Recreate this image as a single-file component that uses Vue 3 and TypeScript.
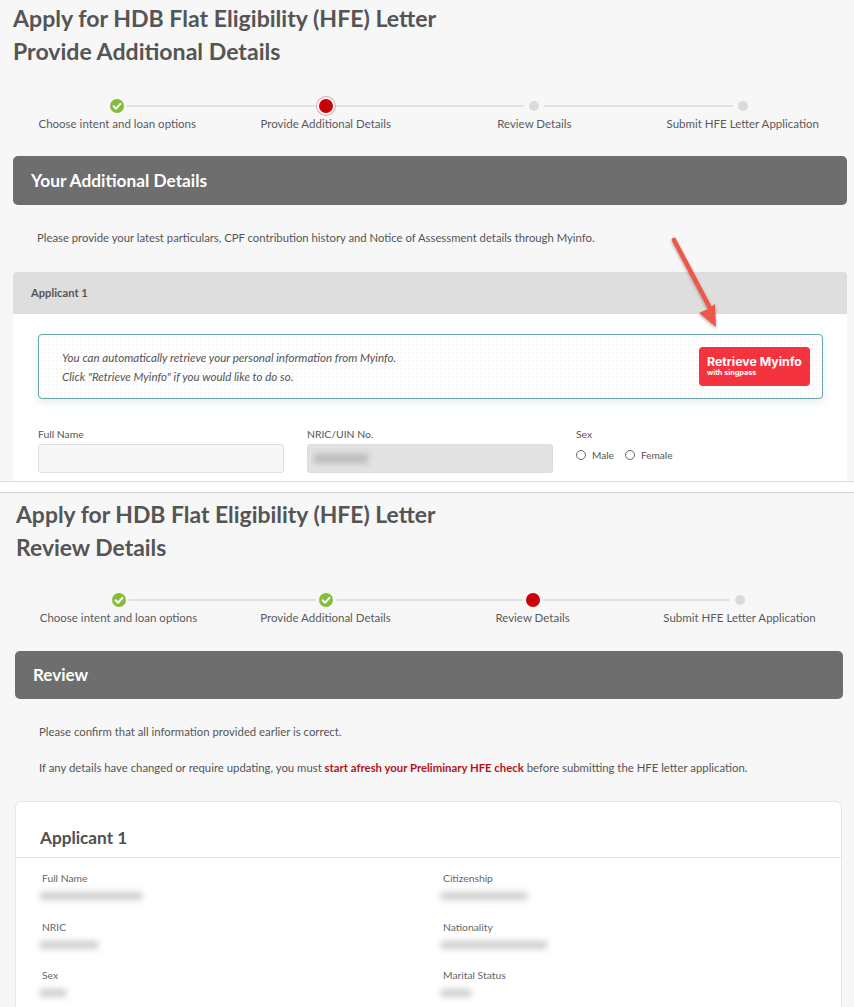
<script setup lang="ts">
type StepState = 'done' | 'active' | 'pending'
interface Step { label: string; state: StepState }
interface Field { label: string; blur: number }

const stepsTop: Step[] = [
  { label: 'Choose intent and loan options', state: 'done' },
  { label: 'Provide Additional Details', state: 'active' },
  { label: 'Review Details', state: 'pending' },
  { label: 'Submit HFE Letter Application', state: 'pending' },
]
const stepsBottom: Step[] = [
  { label: 'Choose intent and loan options', state: 'done' },
  { label: 'Provide Additional Details', state: 'done' },
  { label: 'Review Details', state: 'active' },
  { label: 'Submit HFE Letter Application', state: 'pending' },
]
const fieldsLeft: Field[] = [
  { label: 'Full Name', blur: 102 },
  { label: 'NRIC', blur: 58 },
  { label: 'Sex', blur: 26 },
]
const fieldsRight: Field[] = [
  { label: 'Citizenship', blur: 86 },
  { label: 'Nationality', blur: 106 },
  { label: 'Marital Status', blur: 30 },
]
</script>

<template>
  <div class="page">
    <section class="shot shot-top">
      <h1 class="title">Apply for HDB Flat Eligibility (HFE) Letter<br />Provide Additional Details</h1>

      <div class="stepper">
        <div v-for="(s, i) in stepsTop" :key="s.label" class="step">
          <div class="head">
            <span class="line" :class="{ hidden: i === 0 }"></span>
            <span class="dot" :class="s.state">
              <svg v-if="s.state === 'done'" viewBox="0 0 14 14" width="14" height="14"><path d="M3.6 7.3l2.4 2.4 4.4-4.8" fill="none" stroke="#fff" stroke-width="2" stroke-linecap="round" stroke-linejoin="round" /></svg>
            </span>
            <span class="line" :class="{ hidden: i === stepsTop.length - 1 }"></span>
          </div>
          <div class="step-label">{{ s.label }}</div>
        </div>
      </div>

      <div class="bar">Your Additional Details</div>
      <p class="intro">Please provide your latest particulars, CPF contribution history and Notice of Assessment details through Myinfo.</p>

      <div class="form-card">
        <div class="form-card-head">Applicant 1</div>
        <div class="form-card-body">
          <div class="alert">
            <div class="alert-text">
              <div>You can automatically retrieve your personal information from Myinfo.</div>
              <div>Click "Retrieve Myinfo" if you would like to do so.</div>
            </div>
            <div class="myinfo">
              <span class="myinfo-main">Retrieve Myinfo</span>
              <span class="myinfo-sub">with singpass</span>
            </div>
          </div>

          <div class="form-row">
            <div class="form-col">
              <div class="form-label">Full Name</div>
              <div class="input"></div>
            </div>
            <div class="form-col">
              <div class="form-label">NRIC/UIN No.</div>
              <div class="input disabled"><span class="blur-inline"></span></div>
            </div>
            <div class="form-col">
              <div class="form-label">Sex</div>
              <div class="radios">
                <span class="radio"></span><span class="radio-label">Male</span>
                <span class="radio"></span><span class="radio-label">Female</span>
              </div>
            </div>
          </div>
        </div>
      </div>

      <svg class="arrow" viewBox="0 0 64 100" width="64" height="100">
        <defs>
          <filter id="arrow-shadow" x="-30%" y="-10%" width="160%" height="125%">
            <feDropShadow dx="0" dy="1.5" stdDeviation="1.5" flood-color="#000" flood-opacity="0.35" />
          </filter>
        </defs>
        <g filter="url(#arrow-shadow)">
          <path d="M7 5 L44 75" stroke="#ee5849" stroke-width="4.6" stroke-linecap="round" fill="none" />
          <path d="M49 92 L32 78 L41 74 L48 69 Z" fill="#ee5849" />
        </g>
      </svg>
    </section>

    <div class="divider"></div>

    <section class="shot shot-bottom">
      <h1 class="title title-b">Apply for HDB Flat Eligibility (HFE) Letter<br />Review Details</h1>

      <div class="stepper stepper-b">
        <div v-for="(s, i) in stepsBottom" :key="s.label" class="step">
          <div class="head">
            <span class="line" :class="{ hidden: i === 0 }"></span>
            <span class="dot" :class="[s.state, 'plain']">
              <svg v-if="s.state === 'done'" viewBox="0 0 14 14" width="14" height="14"><path d="M3.6 7.3l2.4 2.4 4.4-4.8" fill="none" stroke="#fff" stroke-width="2" stroke-linecap="round" stroke-linejoin="round" /></svg>
            </span>
            <span class="line" :class="{ hidden: i === stepsBottom.length - 1 }"></span>
          </div>
          <div class="step-label">{{ s.label }}</div>
        </div>
      </div>

      <div class="bar bar-b">Review</div>
      <p class="intro intro-b">Please confirm that all information provided earlier is correct.</p>
      <p class="intro intro-b second">If any details have changed or require updating, you must <strong>start afresh your Preliminary HFE check</strong> before submitting the HFE letter application.</p>

      <div class="review-card">
        <h2 class="review-title">Applicant 1</h2>
        <div class="review-grid">
          <div class="review-col">
            <div v-for="f in fieldsLeft" :key="f.label" class="review-field">
              <div class="review-label">{{ f.label }}</div>
              <div class="blurred" :style="{ width: f.blur + 'px' }"></div>
            </div>
          </div>
          <div class="review-col">
            <div v-for="f in fieldsRight" :key="f.label" class="review-field">
              <div class="review-label">{{ f.label }}</div>
              <div class="blurred" :style="{ width: f.blur + 'px' }"></div>
            </div>
          </div>
        </div>
      </div>
    </section>
  </div>
</template>

<style>
html, body { margin: 0; background: #fff; }
</style>

<style scoped>
.page {
  width: 854px;
  height: 1007px;
  overflow: hidden;
  font-family: Lato, "Open Sans", sans-serif;
  color: #555;
  display: flex;
  flex-direction: column;
}
.shot { background: #f7f7f7; position: relative; overflow: hidden; }
.shot-top { height: 481px; padding: 2px 7px 0 13px; flex: none; box-sizing: border-box; }
.shot-bottom { flex: 1; padding: 5px 11px 0 15px; box-sizing: border-box; }
.divider { height: 10px; flex: none; background: #fff; border-top: 1px solid #dcdcdc; border-bottom: 1px solid #d4d4d4; }

.title { margin: 0; font-size: 23.1px; line-height: 33px; font-weight: 700; color: #555; }
.title-b { margin-left: 1px; font-size: 22.9px; }

.stepper { display: grid; grid-template-columns: repeat(4, 1fr); margin-top: 28px; }
.stepper-b { margin-top: 26px; }
.step { display: flex; flex-direction: column; align-items: center; }
.head { display: flex; align-items: center; width: 100%; height: 20px; }
.line { flex: 1; height: 2px; background: #e1e1e1; }
.line.hidden { background: transparent; }
.dot { flex: none; box-sizing: border-box; border-radius: 50%; display: flex; align-items: center; justify-content: center; }
.dot.done { background: #84bd3c; width: 14px; height: 14px; margin: 0 3px; }
.dot.active { background: #c90008; border: 2px solid #f7f7f7; box-shadow: 0 0 0 1px #e5a9a9; width: 18px; height: 18px; margin: 0 1px; }
.dot.active.plain { box-shadow: none; }
.dot.pending { background: #dbdbdb; width: 10px; height: 10px; margin: 0 5px; }
.step-label { font-size: 11.5px; line-height: 16px; color: #5a5a5a; white-space: nowrap; }

.bar { margin-top: 24px; height: 49px; box-sizing: border-box; border-radius: 5px; background: #6e6e6e; color: #fff; font-size: 17.3px; font-weight: 700; line-height: 49px; padding-left: 18px; }
.bar-b { margin-top: 25px; height: 48px; line-height: 48px; width: 828px; font-size: 17px; }
.intro { margin: 25px 0 0 24px; font-size: 11.3px; line-height: 16px; color: #555; white-space: nowrap; }
.intro-b { margin-top: 25px; font-size: 11.35px; }
.intro-b.second { margin-top: 20px; }
strong { color: #b3141c; font-weight: 700; }

.form-card { margin-top: 26px; background: #fff; height: 210px; border-radius: 4px 4px 0 0; }
.form-card-head { height: 42px; background: #dedede; font-size: 11.2px; font-weight: 700; line-height: 42px; padding-left: 18px; color: #555; border-radius: 4px 4px 0 0; }
.form-card-body { padding: 20px 24px 0 25px; }

.alert {
  height: 65px;
  box-sizing: border-box;
  border: 1px solid #6aa3a8;
  border-radius: 4px;
  padding: 0 12px 0 23px;
  display: flex;
  align-items: center;
  justify-content: space-between;
  background-color: #fff;
  background-image: radial-gradient(#f6f6f6 1px, transparent 1px);
  background-size: 4px 4px;
  box-shadow: 0 3px 9px rgba(70, 130, 135, 0.16);
}
.alert-text { font-size: 11.55px; line-height: 19px; font-style: italic; color: #555; }
.myinfo { width: 111px; height: 39px; box-sizing: border-box; background: #f4333e; border-radius: 4px; color: #fff; padding: 7px 0 0 8px; display: flex; flex-direction: column; font-family: Inter, sans-serif; font-weight: 700; }
.myinfo-main { font-size: 12.3px; line-height: 15px; white-space: nowrap; }
.myinfo-sub { font-size: 7.3px; line-height: 8px; }

.form-row { display: grid; grid-template-columns: 246px 246px 1fr; column-gap: 23px; margin-top: 28px; }
.form-label { font-size: 10.4px; line-height: 14px; margin-bottom: 3px; color: #555; }
.input { height: 29px; box-sizing: border-box; background: #f7f7f7; border: 1px solid #dedede; border-radius: 3px; display: flex; align-items: center; padding-left: 6px; }
.input.disabled { background: #e2e2e2; border-color: #dcdcdc; }
.blur-inline { width: 54px; height: 9px; background: #b9b9b9; filter: blur(3px); display: block; }
.radios { display: flex; align-items: center; margin-top: 6px; font-size: 10.1px; }
.radio { width: 8px; height: 8px; border: 1px solid #666; border-radius: 50%; background: #fff; }
.radio-label { margin: 0 11px 0 6px; line-height: 16px; }

.arrow { position: absolute; left: 667px; top: 235px; }

.review-card { margin-top: 25px; width: 827px; background: #fff; border: 1px solid #e6e6e6; border-bottom: none; border-radius: 6px 6px 0 0; height: 240px; box-sizing: border-box; }
.review-title { margin: 0; height: 56px; box-sizing: border-box; padding: 24px 0 0 24px; font-size: 17.2px; line-height: 24px; font-weight: 700; color: #505050; border-bottom: 1px solid #e3e3e3; }
.review-grid { display: grid; grid-template-columns: 401px 1fr; padding: 13px 0 0 26px; }
.review-field { height: 48.7px; }
.review-label { font-size: 10.3px; line-height: 14px; color: #666; }
.blurred { height: 8px; margin-top: 7px; margin-left: -2px; background: #cdcdcd; filter: blur(3px); }
</style>
